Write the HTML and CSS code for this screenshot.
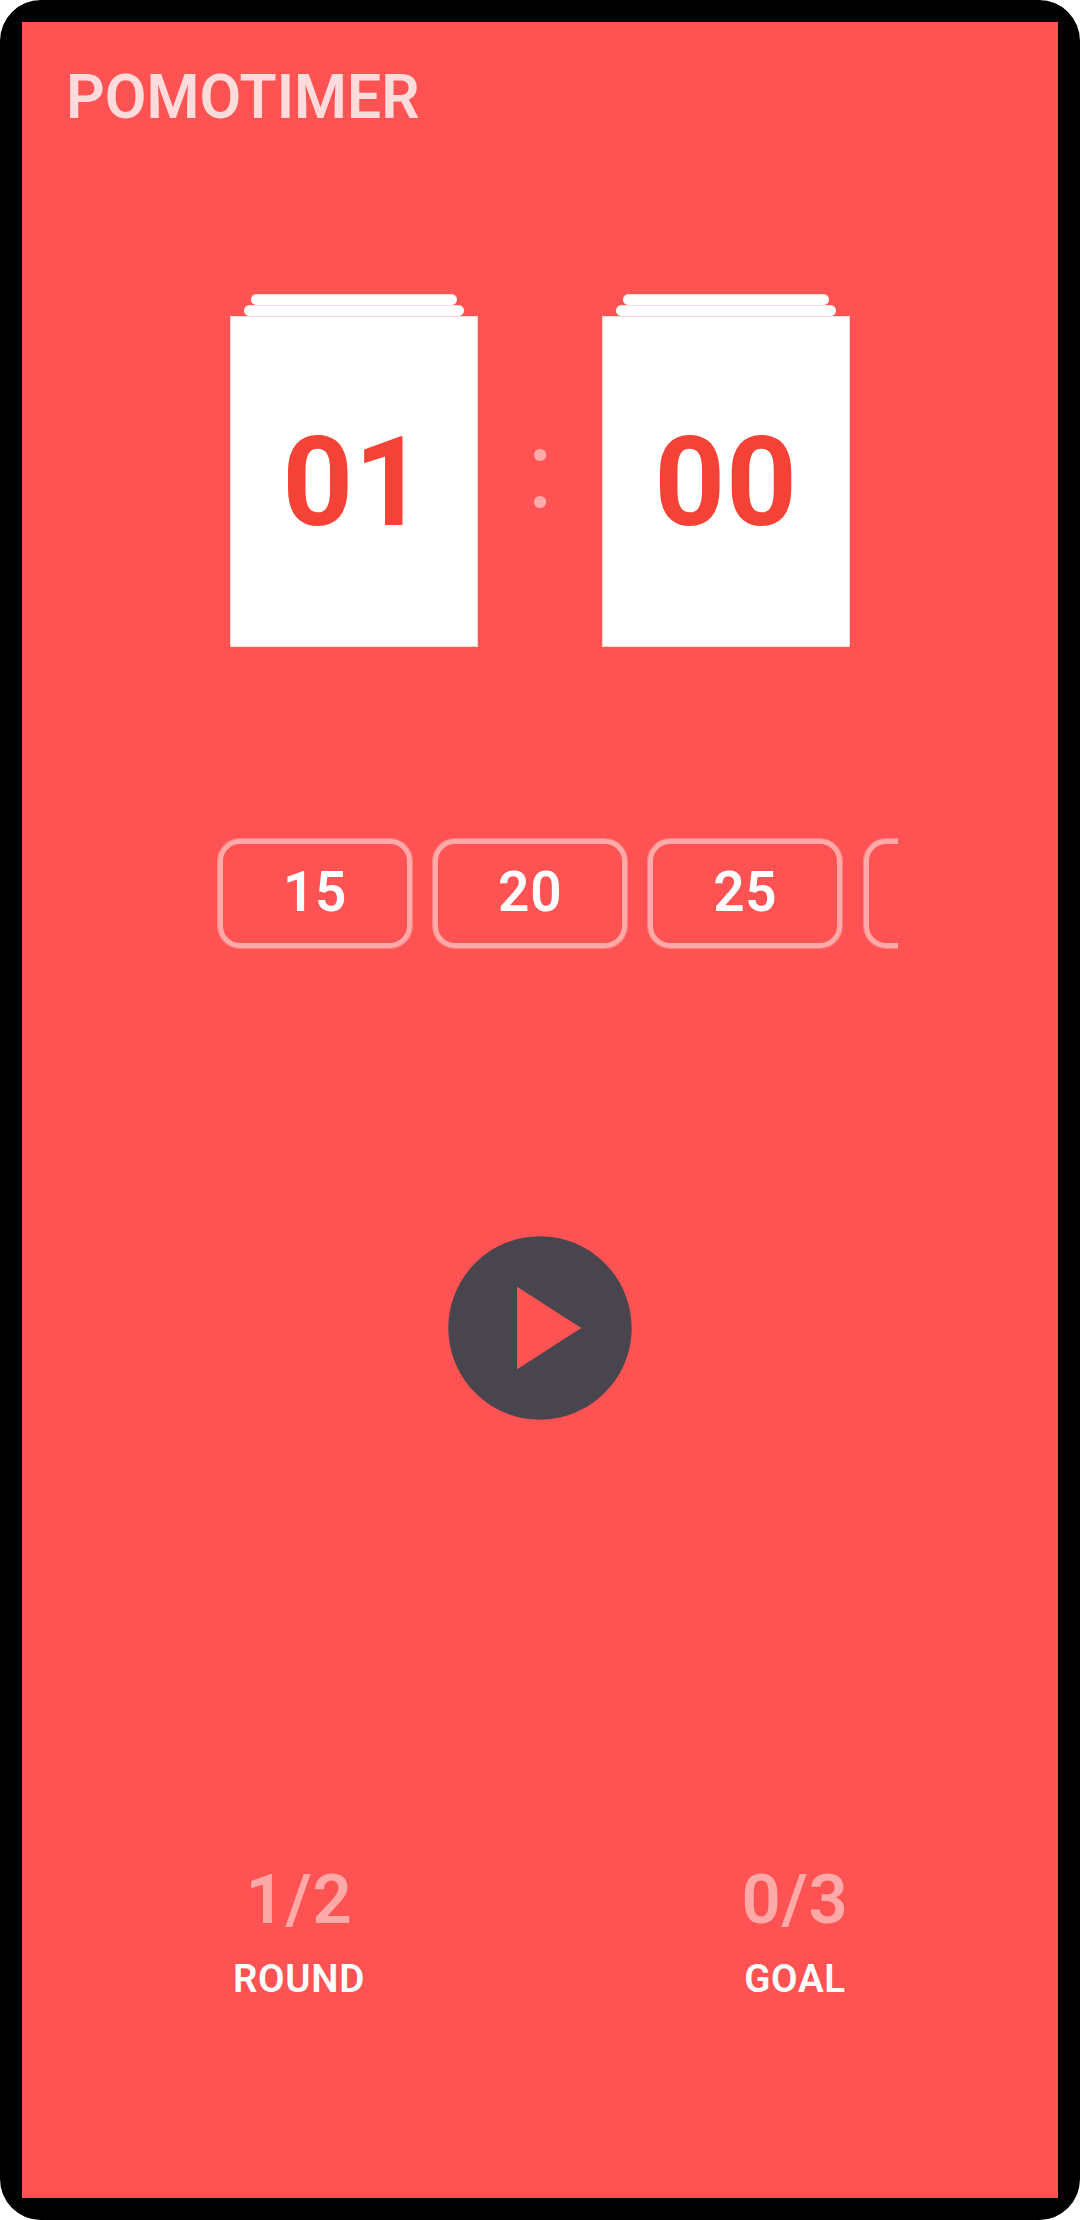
FILE: index.html
```html
<!DOCTYPE html>
<html lang="en">
<head>
<meta charset="utf-8">
<title>Pomotimer</title>
<link rel="stylesheet" href="styles.css">
</head>
<body>
<div class="device">
<main class="screen">
  <h1 class="title">POMOTIMER</h1>
  <section class="clock">
    <div class="stack">
      <div class="sheet sheet-back"></div>
      <div class="sheet sheet-mid"></div>
      <div class="card">01</div>
    </div>
    <div class="colon">:</div>
    <div class="stack">
      <div class="sheet sheet-back"></div>
      <div class="sheet sheet-mid"></div>
      <div class="card">00</div>
    </div>
  </section>
  <section class="presets">
    <button class="preset">15</button>
    <button class="preset">20</button>
    <button class="preset">25</button>
    <button class="preset" aria-label="More"></button>
  </section>
  <button class="play" aria-label="Start">
    <svg viewBox="0 0 24 24" width="220" height="220"><path fill="#49454f" d="M12 2C6.48 2 2 6.48 2 12s4.48 10 10 10 10-4.48 10-10S17.52 2 12 2zM9.5 16.5v-9l7 4.5-7 4.5z"/></svg>
  </button>
  <section class="stats">
    <div class="stat"><span class="value">1/2</span><span class="label">ROUND</span></div>
    <div class="stat"><span class="value">0/3</span><span class="label">GOAL</span></div>
  </section>
</main>
</div>
</body>
</html>
```
FILE: styles.css
```css
* { box-sizing: border-box; }

body {
  margin: 0;
  background: #fff;
  font-family: Roboto, "Liberation Sans", sans-serif;
  font-weight: 600;
}

button {
  padding: 0;
  border: 0;
  background: none;
  color: inherit;
  font: inherit;
}

.device {
  width: 1080px;
  height: 2220px;
  padding: 22px;
  border-radius: 41px;
  background: #000;
}

.screen {
  display: flex;
  flex-direction: column;
  height: 100%;
  background: #ff5252;
  color: #fff;
  overflow: hidden;
}

.title {
  height: 72px;
  margin: 40px 0 0 44px;
  font-size: 60.5px;
  font-weight: 600;
  line-height: 72px;
  color: #ffdbdb;
}

.clock {
  display: flex;
  justify-content: center;
  height: 353px;
  margin-top: 160px;
}

.stack {
  display: flex;
  flex-direction: column;
  align-items: center;
  width: 248px;
}

.sheet {
  flex: none;
  height: 11px;
  border-top: 1px solid #ffdcdc;
  border-radius: 5.5px;
  background: #fff;
}

.sheet-back { width: 206px; }
.sheet-mid { width: 220px; }

.card {
  width: 248px;
  height: 331px;
  border: 1px solid #ffd4d4;
  background: #fff;
  color: #f44336;
  font-size: 123.75px;
  font-weight: 700;
  line-height: 331px;
  letter-spacing: 0.69px;
  text-align: center;
}

.colon {
  width: 124px;
  color: #ffa9a9;
  font-size: 110px;
  font-weight: 400;
  line-height: 351px;
  text-align: center;
}

.presets {
  display: flex;
  gap: 21.2px;
  width: 682px;
  height: 111px;
  margin: 191px 0 0 194px;
  padding: 1px 0 1px 2px;
  overflow: hidden;
}

.preset {
  flex: none;
  width: 194px;
  height: 109px;
  padding-bottom: 3px;
  border: 5px solid #ffa9a9;
  border-radius: 22px;
  box-shadow: 0 0 0 1px #ff8080;
  font-size: 55px;
  letter-spacing: 0.69px;
}

.play {
  align-self: center;
  width: 220px;
  height: 220px;
  margin-top: 269px;
}

.play svg { display: block; }

.stats {
  display: grid;
  grid-template-columns: 496px 496px;
  margin: 422px 0 0 29px;
}

.stat {
  display: flex;
  flex-direction: column;
  align-items: center;
  gap: 16px;
}

.value {
  font-size: 68.75px;
  line-height: 80px;
  letter-spacing: 0.69px;
  color: #ffa9a9;
}

.label {
  font-size: 38.5px;
  line-height: 46px;
  letter-spacing: 0.69px;
}
```
